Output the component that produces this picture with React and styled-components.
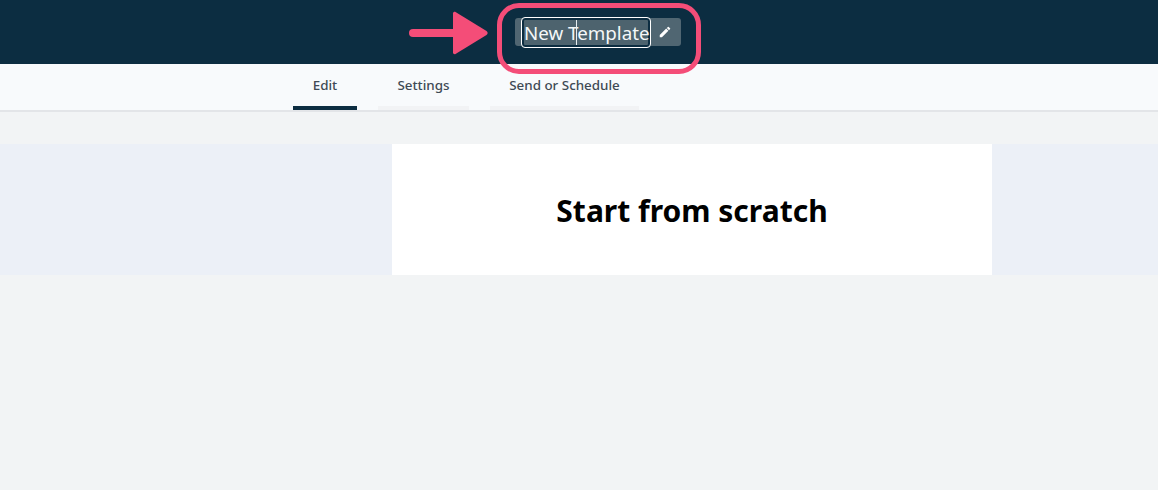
import React from 'react';
import styled, { createGlobalStyle } from 'styled-components';

const GlobalStyle = createGlobalStyle`
  html, body {
    margin: 0;
    padding: 0;
    height: 100%;
    background-color: #f2f4f5;
    font-family: "Noto Sans", "Open Sans", sans-serif;
  }
`;

const App = () => {
  return (
    <Page>
      <GlobalStyle />
      <Header>
        <TitleWrap>
          <TitleChip>
            <TitleInput>
              New Template
              <Caret />
            </TitleInput>
            <PencilSlot>
              <svg width="14" height="14" viewBox="0 0 24 24" fill="#fff">
                <path d="M3 17.25V21h3.75L17.81 9.94l-3.75-3.75L3 17.25zM20.71 7.04a1 1 0 0 0 0-1.41l-2.34-2.34a1 1 0 0 0-1.41 0l-1.83 1.83 3.75 3.75 1.83-1.83z" />
              </svg>
            </PencilSlot>
          </TitleChip>
          <Highlight />
          <Arrow width="82" height="44" viewBox="0 0 82 44">
            <path d="M5 22H50" stroke="#f44d78" strokeWidth="8" strokeLinecap="round" />
            <path d="M45 2.5C45 1 46.5 0.5 47.5 1L78.5 20C80 21 80 23 78.5 24L47.5 43C46.5 43.5 45 43 45 41.5Z" fill="#f44d78" />
          </Arrow>
        </TitleWrap>
      </Header>
      <TabBar>
        <Tab $width={64} $active>Edit</Tab>
        <Tab $width={91}>Settings</Tab>
        <Tab $width={149}>Send or Schedule</Tab>
      </TabBar>
      <Band>
        <Canvas>
          <Heading>Start from scratch</Heading>
        </Canvas>
      </Band>
    </Page>
  );
};

const Page = styled.div`
  min-height: 490px;
  display: flex;
  flex-direction: column;
  background-color: #f2f4f5;
  overflow: hidden;
`;

const Header = styled.header`
  height: 64px;
  flex-shrink: 0;
  display: flex;
  align-items: flex-start;
  padding-left: 515px;
  background-color: #0c2d41;
`;

const TitleWrap = styled.div`
  position: relative;
  margin-top: 18px;
`;

const TitleChip = styled.div`
  width: 166px;
  height: 28px;
  display: flex;
  align-items: center;
  padding-left: 6px;
  box-sizing: border-box;
  border-radius: 3px;
  background-color: #506672;
`;

const TitleInput = styled.div`
  position: relative;
  width: 130px;
  height: 31px;
  flex-shrink: 0;
  box-sizing: border-box;
  padding-left: 2px;
  border: 1px solid #ffffff;
  border-radius: 4px;
  box-shadow: inset 0 0 0 2px #0c2d41;
  background-color: #4d636e;
  color: #f4f7f8;
  font-size: 18.75px;
  line-height: 30px;
  white-space: nowrap;
`;

const Caret = styled.span`
  position: absolute;
  left: 54px;
  top: 2px;
  width: 1px;
  height: 25px;
  background-color: #e8eef0;
`;

const PencilSlot = styled.div`
  flex: 1;
  display: flex;
  justify-content: center;
  align-items: center;
  padding-right: 2px;
`;

const Highlight = styled.div`
  position: absolute;
  left: -18px;
  top: -15px;
  width: 204px;
  height: 71px;
  box-sizing: border-box;
  border: 5px solid #f44d78;
  border-radius: 22px;
  pointer-events: none;
`;

const Arrow = styled.svg`
  position: absolute;
  left: -107px;
  top: -7px;
`;

const TabBar = styled.nav`
  height: 48px;
  flex-shrink: 0;
  box-sizing: border-box;
  display: flex;
  gap: 21px;
  padding-left: 293px;
  background-color: #f8fafc;
  border-bottom: 2px solid #e3e5e8;
`;

const Tab = styled.div`
  width: ${(p) => p.$width}px;
  height: 46px;
  box-sizing: border-box;
  padding-top: 12px;
  text-align: center;
  font-size: 13.4px;
  font-weight: 500;
  line-height: 18px;
  color: #3f4a55;
  border-bottom: 4px solid ${(p) => (p.$active ? '#0c2d41' : '#f2f3f5')};
`;

const Band = styled.section`
  margin-top: 32px;
  height: 131px;
  display: flex;
  padding-left: 392px;
  background-color: #ecf0f7;
`;

const Canvas = styled.div`
  width: 600px;
  box-sizing: border-box;
  padding-top: 46px;
  text-align: center;
  background-color: #ffffff;
`;

const Heading = styled.h1`
  margin: 0;
  font-size: 30px;
  font-weight: 700;
  line-height: 42px;
  color: #000000;
`;

export default App;
